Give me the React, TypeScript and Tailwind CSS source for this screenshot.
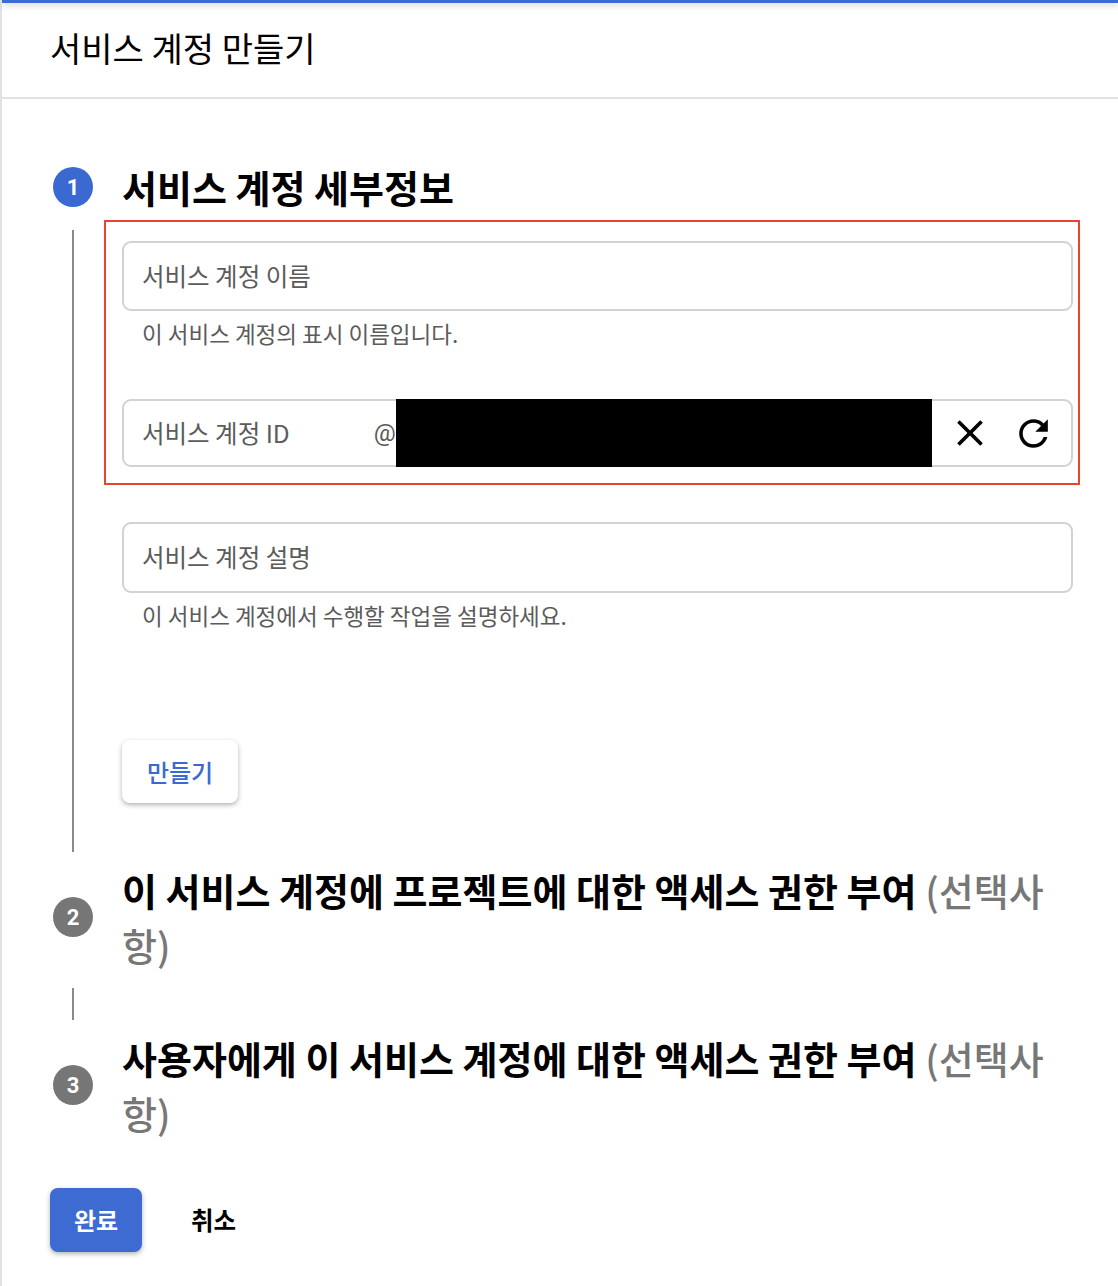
import React from 'react'

const FONT = { fontFamily: '"Noto Sans CJK KR", "Noto Sans", Roboto, sans-serif' }

function StepCircle({ n, active }: { n: number; active?: boolean }) {
  return (
    <div
      className={`flex h-[40px] w-[40px] shrink-0 items-center justify-center rounded-full text-[22px] font-bold text-white ${
        active ? 'bg-[#3b69d2]' : 'bg-[#767676]'
      }`}
      style={{ fontFamily: 'Roboto, "Liberation Sans", sans-serif' }}
    >
      {n}
    </div>
  )
}

function CloseIcon() {
  return (
    <svg viewBox="0 0 24 24" className="h-[44px] w-[44px]" fill="#000">
      <path d="M19 6.41 17.59 5 12 10.59 6.41 5 5 6.41 10.59 12 5 17.59 6.41 19 12 13.41 17.59 19 19 17.59 13.41 12z" />
    </svg>
  )
}

function RefreshIcon() {
  return (
    <svg viewBox="0 0 24 24" className="h-[43px] w-[43px]" fill="#000">
      <path d="M17.65 6.35A7.958 7.958 0 0 0 12 4c-4.42 0-7.99 3.58-7.99 8s3.57 8 7.99 8c3.73 0 6.84-2.55 7.730-6h-2.08A5.99 5.99 0 0 1 12 18c-3.31 0-6-2.69-6-6s2.69-6 6-6c1.66 0 3.14.69 4.22 1.78L13 11h7V4l-2.35 2.35z" />
    </svg>
  )
}

function StepTitle({ main, n }: { main: string; n: number }) {
  return (
    <div className="flex items-center">
      <StepCircle n={n} />
      <h2 className="ml-[29px] w-[951px] text-[38px] font-bold leading-[55px] text-black">
        {main} <span className="font-medium text-[#777]">(선택사항)</span>
      </h2>
    </div>
  )
}

export default function App() {
  return (
    <div className="min-h-screen border-l-2 border-[#e2e2e2] bg-white text-black" style={FONT}>
      <div className="h-[3px] bg-[#3d6bd5] shadow-[0_2px_6px_rgba(0,0,0,0.25)]" />
      <header className="flex h-[96px] items-center border-b-2 border-[#e3e3e3] pb-[4px] pl-[48px]">
        <h1 className="text-[34px] font-normal leading-none">서비스 계정 만들기</h1>
      </header>

      <main className="pl-[51px] pt-[68px]">
        {/* step 1 */}
        <div className="flex h-[40px] items-center">
          <StepCircle n={1} active />
          <h2 className="ml-[29px] text-[38px] font-bold leading-none">서비스 계정 세부정보</h2>
        </div>

        <div className="flex">
          <div className="flex w-[40px] shrink-0 justify-center pt-[23px]">
            <div className="w-[2px] bg-[#8a8a8a]" />
          </div>
          <div className="ml-[29px] flex w-[951px] flex-col pb-[49px] pt-[34px]">
            <div className="relative">
              <div className="flex h-[70px] items-center rounded-[9px] border-2 border-[#d2d2d2] px-[18px] text-[24.5px] text-[#5b5b5b]">
                서비스 계정 이름
              </div>
              <p className="mt-[8px] pl-[20px] text-[22.5px] leading-[28px] text-[#5b5b5b]">
                이 서비스 계정의 표시 이름입니다.
              </p>

              <div className="relative mt-[52px] flex h-[68px] items-center rounded-[9px] border-2 border-[#d2d2d2] pl-[18px] pr-[16px] text-[24.5px] text-[#5b5b5b]">
                <span>서비스 계정 ID</span>
                <span className="ml-[84px]" style={{ fontFamily: 'Roboto, sans-serif' }}>@</span>
                <div className="ml-auto flex items-center gap-[20px]">
                  <CloseIcon />
                  <RefreshIcon />
                </div>
                <div className="absolute bottom-[-2px] left-[272px] top-[-2px] w-[536px] bg-black" />
              </div>

              <div className="pointer-events-none absolute bottom-[-18px] left-[-18px] right-[-7px] top-[-21px] border-2 border-[#e8442e]" />
            </div>

            <div className="mt-[55px] flex h-[71px] items-center rounded-[9px] border-2 border-[#d2d2d2] px-[18px] text-[24.5px] text-[#5b5b5b]">
              서비스 계정 설명
            </div>
            <p className="mt-[8px] pl-[20px] text-[22.5px] leading-[28px] text-[#5b5b5b]">
              이 서비스 계정에서 수행할 작업을 설명하세요.
            </p>

            <button className="mt-[111px] flex h-[63px] w-[116px] items-center justify-center rounded-[8px] bg-white text-[24px] font-medium text-[#3b69d2] shadow-[0_2px_5px_rgba(0,0,0,0.3)]">
              만들기
            </button>
          </div>
        </div>

        {/* step 2 */}
        <div className="pt-[10px]">
          <StepTitle n={2} main="이 서비스 계정에 프로젝트에 대한 액세스 권한 부여" />
        </div>
        <div className="flex w-[40px] justify-center pb-[10px] pt-[16px]">
          <div className="h-[32px] w-[2px] bg-[#8a8a8a]" />
        </div>

        {/* step 3 */}
        <StepTitle n={3} main="사용자에게 이 서비스 계정에 대한 액세스 권한 부여" />
      </main>

      <div className="flex items-center pb-[34px] pl-[48px] pt-[48px]">
        <button className="flex h-[64px] w-[92px] items-center justify-center rounded-[8px] bg-[#3d6bd2] text-[24px] font-bold text-white shadow-[0_2px_5px_rgba(0,0,0,0.3)]">
          완료
        </button>
        <button className="ml-[25px] px-[24px] text-[24.5px] font-bold text-black">취소</button>
      </div>
    </div>
  )
}
